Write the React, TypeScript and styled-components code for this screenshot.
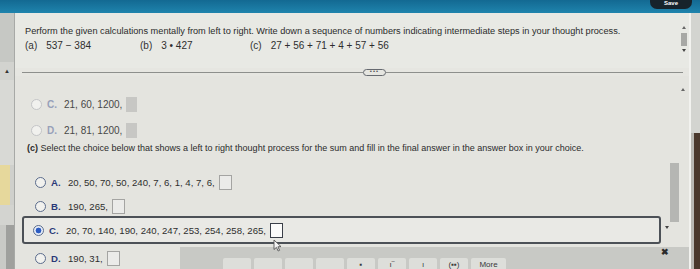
import React from "react";
import styled, { createGlobalStyle, css } from "styled-components";

const Global = createGlobalStyle`
  html, body { margin: 0; padding: 0; background: #e4e4df; }
  body { font-family: "Liberation Sans", Arial, sans-serif; }
`;

const Page = styled.div`
  width: 700px;
  height: 269px;
  overflow: hidden;
  display: flex;
  flex-direction: column;
  background: #e4e4df;
  font-family: "Liberation Sans", Arial, sans-serif;
  color: #2e2e2e;
`;

const Header = styled.div`
  height: 13px;
  flex: none;
  background: linear-gradient(#136992, #1f84ad);
  display: flex;
  justify-content: flex-end;
  padding-right: 8px;
  overflow: hidden;
`;

const SavePill = styled.div`
  width: 42px;
  height: 9px;
  border-radius: 0 0 7px 7px;
  background: #17232c;
  color: #ffffff;
  font-size: 6px;
  line-height: 6px;
  font-weight: bold;
  display: flex;
  align-items: flex-start;
  justify-content: center;
`;

const Body = styled.div`
  flex: 1;
  min-height: 0;
  display: flex;
`;

const LeftRail = styled.div`
  width: 14px;
  flex: none;
  display: flex;
  flex-direction: column;
  border-right: 1px solid #a7a9a6;
`;

const RailSeg = styled.div<{ $h?: number; $bg: string }>`
  height: ${(p) => (p.$h ? `${p.$h}px` : "auto")};
  flex: ${(p) => (p.$h ? "none" : "1")};
  background: ${(p) => p.$bg};
  display: flex;
  align-items: center;
  justify-content: center;
  font-size: 6px;
  color: #333;
`;

const MainCol = styled.div`
  flex: 1;
  min-width: 0;
  display: flex;
  flex-direction: column;
`;

const TopPanel = styled.div`
  height: 55px;
  flex: none;
  display: flex;
  background: #e8e9e4;
`;

const TopContent = styled.div`
  flex: 1;
  padding: 12px 0 0 10px;
`;

const Question = styled.div`
  font-size: 9.2px;
  line-height: 12px;
  white-space: nowrap;
  color: #2b2b2b;
`;

const PartsRow = styled.div`
  display: flex;
  margin-top: 3px;
  font-size: 10px;
  line-height: 12px;
  white-space: nowrap;
`;

const Part = styled.div<{ $w?: number }>`
  width: ${(p) => (p.$w ? `${p.$w}px` : "auto")};
  display: flex;
  gap: 9px;
`;

const PartLabel = styled.span`
  color: #333;
`;

const TopScroll = styled.div`
  width: 10px;
  flex: none;
  display: flex;
  flex-direction: column;
  align-items: center;
  padding-top: 13px;
`;

const Tri = styled.span<{ $down?: boolean }>`
  width: 0;
  height: 0;
  border-left: 2.5px solid transparent;
  border-right: 2.5px solid transparent;
  ${(p) =>
    p.$down
      ? css`border-top: 3px solid #444;`
      : css`border-bottom: 3px solid #666;`}
`;

const Thumb = styled.span`
  width: 6px;
  height: 13px;
  margin: 4px 0 3px;
  background: #a7a8a5;
`;

const DividerRow = styled.div`
  height: 8px;
  flex: none;
  display: flex;
  align-items: center;
  padding: 0 6px 0 7px;
  background: #e6e6e1;
`;

const Line = styled.span<{ $w?: number }>`
  height: 1px;
  background: #8d8f8c;
  flex: ${(p) => (p.$w ? `0 0 ${p.$w}px` : "1")};
`;

const MorePill = styled.span`
  width: 21px;
  height: 5px;
  border: 1px solid #666a70;
  border-radius: 4px;
  font-size: 6px;
  line-height: 3px;
  text-align: center;
  color: #555;
  letter-spacing: 1px;
  overflow: hidden;
`;

const LowerPanel = styled.div`
  flex: 1;
  display: flex;
  position: relative;
  background: #e4e4df;
`;

const LowerContent = styled.div`
  flex: 1;
  padding-left: 12px;
  display: flex;
  flex-direction: column;
`;

const OptionRow = styled.div<{ $mt: number; $ml: number; $size?: number }>`
  height: 16px;
  margin-top: ${(p) => p.$mt}px;
  margin-left: ${(p) => p.$ml}px;
  display: flex;
  align-items: center;
  font-size: ${(p) => p.$size ?? 9.6}px;
  white-space: nowrap;
`;

const SelectedBox = styled.div`
  height: 24px;
  margin: 2px 2px 0 -5px;
  border: 2px solid #4c5157;
  border-radius: 3px;
  padding-left: 9px;
  display: flex;
  align-items: center;
  font-size: 9.6px;
  white-space: nowrap;
  background: #e9e9e5;
`;

const Radio = styled.span<{ $faded?: boolean; $checked?: boolean }>`
  width: 9px;
  height: 9px;
  flex: none;
  border-radius: 50%;
  border: 1.3px solid ${(p) => (p.$faded ? "#c4c5c7" : "#5b6c8c")};
  background: ${(p) =>
    p.$checked
      ? "radial-gradient(circle, #2c5cc2 0 2.6px, #e6ecf7 3.2px)"
      : "#f1f1ee"};
`;

const Letter = styled.span<{ $faded?: boolean }>`
  width: 11px;
  margin-left: 5px;
  font-weight: bold;
  color: ${(p) => (p.$faded ? "#97a0b9" : "#2a3978")};
`;

const Numbers = styled.span<{ $faded?: boolean }>`
  margin-left: 6px;
  color: ${(p) => (p.$faded ? "#484848" : "#2e2e2e")};
`;

const AnswerBox = styled.span<{ $variant: "faded" | "normal" | "active" }>`
  flex: none;
  margin-left: 4px;
  ${(p) =>
    p.$variant === "faded"
      ? css`
          width: 11px;
          height: 15px;
          background: #c7c7c4;
        `
      : p.$variant === "normal"
      ? css`
          width: 11px;
          height: 13px;
          background: #ebebe9;
          border: 1px solid #a4a4a2;
        `
      : css`
          width: 11px;
          height: 13px;
          background: #fbfbfa;
          border: 1.5px solid #3a3f48;
        `}
`;

const PartText = styled.div`
  height: 12px;
  margin-top: 4px;
  font-size: 9px;
  line-height: 12px;
  white-space: nowrap;
  color: #2b2b2b;
  b {
    font-weight: bold;
  }
`;

const LowerScroll = styled.div`
  width: 26px;
  flex: none;
  display: flex;
  flex-direction: column;
  align-items: flex-start;
`;

const Track = styled.span`
  width: 9px;
  height: 59px;
  margin: 72px 0 0 7px;
  background: #b5b6b3;
`;

const Toolbar = styled.div`
  position: absolute;
  left: 165px;
  right: 0;
  bottom: 0;
  height: 22px;
  background: #c8c9c5;
  display: flex;
  padding-left: 43px;
`;

const Keys = styled.div`
  align-self: flex-end;
  display: flex;
  gap: 3px;
`;

const Key = styled.div<{ $w?: number }>`
  width: ${(p) => p.$w ?? 28}px;
  height: 11px;
  background: #dddeda;
  border-radius: 2px 2px 0 0;
  font-size: 8px;
  line-height: 8px;
  padding-top: 3px;
  text-align: center;
  color: #3a3a3a;
  box-sizing: border-box;
`;

const CloseX = styled.span`
  margin: 1px 20px 0 auto;
  font-size: 9px;
  line-height: 9px;
  font-weight: bold;
  color: #2c2c2c;
`;

const Pointer = styled.svg`
  position: absolute;
  left: 258px;
  top: 163px;
`;

const RightEdge = styled.div`
  width: 9px;
  flex: none;
  display: flex;
  flex-direction: column;
  border-left: 2px solid #f2f2ef;
`;

const EdgeSeg = styled.div<{ $h?: number; $bg: string }>`
  height: ${(p) => (p.$h ? `${p.$h}px` : "auto")};
  flex: ${(p) => (p.$h ? "none" : "1")};
  background: ${(p) => p.$bg};
`;

export default function App() {
  return (
    <Page>
      <Global />
      <Header>
        <SavePill>Save</SavePill>
      </Header>
      <Body>
        <LeftRail>
          <RailSeg $h={49} $bg="#c6c8c4" />
          <RailSeg $h={18} $bg="#d2d3cf">▲</RailSeg>
          <RailSeg $h={85} $bg="#d8d9d5" />
          <RailSeg $h={40} $bg="linear-gradient(90deg, #e6d89c 70%, #cfd0cc 70%)" />
          <RailSeg $h={20} $bg="#d3d4d0" />
          <RailSeg $bg="linear-gradient(90deg, #c9cac6 40%, #9fa09d 40%)" />
        </LeftRail>
        <MainCol>
          <TopPanel>
            <TopContent>
              <Question>
                Perform the given calculations mentally from left to right. Write down a sequence of numbers
                indicating intermediate steps in your thought process.
              </Question>
              <PartsRow>
                <Part $w={115}>
                  <PartLabel>(a)</PartLabel>
                  <span>537 − 384</span>
                </Part>
                <Part $w={110}>
                  <PartLabel>(b)</PartLabel>
                  <span>3 • 427</span>
                </Part>
                <Part>
                  <PartLabel>(c)</PartLabel>
                  <span>27 + 56 + 71 + 4 + 57 + 56</span>
                </Part>
              </PartsRow>
            </TopContent>
            <TopScroll>
              <Tri />
              <Thumb />
              <Tri $down />
            </TopScroll>
          </TopPanel>
          <DividerRow>
            <Line $w={341} />
            <MorePill>•••</MorePill>
            <Line />
          </DividerRow>
          <LowerPanel>
            <LowerContent>
              <OptionRow $mt={20} $ml={4} $size={10}>
                <Radio $faded />
                <Letter $faded>C.</Letter>
                <Numbers $faded>21, 60, 1200,</Numbers>
                <AnswerBox $variant="faded" />
              </OptionRow>
              <OptionRow $mt={10} $ml={4} $size={10}>
                <Radio $faded />
                <Letter $faded>D.</Letter>
                <Numbers $faded>21, 81, 1200,</Numbers>
                <AnswerBox $variant="faded" />
              </OptionRow>
              <PartText>
                <b>(c)</b> Select the choice below that shows a left to right thought process for the sum and fill
                in the final answer in the answer box in your choice.
              </PartText>
              <OptionRow $mt={20} $ml={8}>
                <Radio />
                <Letter>A.</Letter>
                <Numbers>20, 50, 70, 50, 240, 7, 6, 1, 4, 7, 6,</Numbers>
                <AnswerBox $variant="normal" />
              </OptionRow>
              <OptionRow $mt={8} $ml={8}>
                <Radio />
                <Letter>B.</Letter>
                <Numbers>190, 265,</Numbers>
                <AnswerBox $variant="normal" />
              </OptionRow>
              <SelectedBox>
                <Radio $checked />
                <Letter>C.</Letter>
                <Numbers>20, 70, 140, 190, 240, 247, 253, 254, 258, 265,</Numbers>
                <AnswerBox $variant="active" />
              </SelectedBox>
              <OptionRow $mt={6} $ml={8}>
                <Radio />
                <Letter>D.</Letter>
                <Numbers>190, 31,</Numbers>
                <AnswerBox $variant="normal" />
              </OptionRow>
            </LowerContent>
            <LowerScroll>
              <Tri style={{ marginTop: 12, marginLeft: 18 }} />
              <Track />
              <Tri $down style={{ marginTop: 4, marginLeft: 2 }} />
            </LowerScroll>
            <Toolbar>
              <Keys>
                <Key />
                <Key />
                <Key />
                <Key />
                <Key>▪</Key>
                <Key>ı‾</Key>
                <Key>ı</Key>
                <Key>(▪▪)</Key>
                <Key $w={35}>More</Key>
              </Keys>
              <CloseX>✖</CloseX>
            </Toolbar>
            <Pointer width="9" height="13" viewBox="0 0 9 13">
              <path d="M1 1 L1 10.5 L3.4 8.4 L5.2 12 L6.6 11.3 L4.9 7.8 L8 7.6 Z" fill="#f4f4f4" stroke="#555" strokeWidth="0.9" />
            </Pointer>
          </LowerPanel>
        </MainCol>
        <RightEdge>
          <EdgeSeg $h={120} $bg="#d3d4d0" />
          <EdgeSeg $bg="linear-gradient(90deg, #b8b7b2 35%, #4a382c 35%)" />
        </RightEdge>
      </Body>
    </Page>
  );
}
